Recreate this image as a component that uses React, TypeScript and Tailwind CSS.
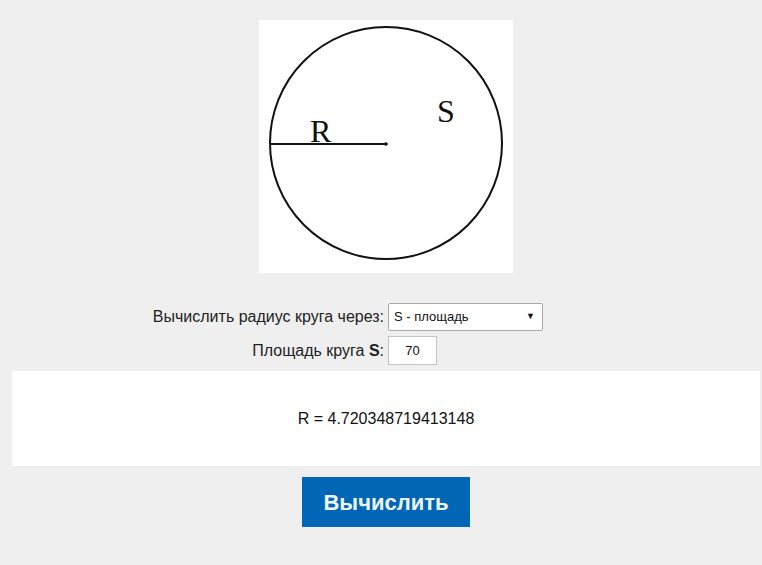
export default function App() {
  return (
    <div className="min-h-[565px] bg-[#efefef] pt-5 pl-3 pr-[2px] font-['Liberation_Sans',Arial,sans-serif] text-[#222]">
      <div className="flex justify-center">
        <svg width="254" height="253" viewBox="0 0 254 253" className="block bg-white">
          <circle cx="127" cy="123" r="116" fill="none" stroke="#111" strokeWidth="2" />
          <line x1="11" y1="124" x2="127" y2="124" stroke="#111" strokeWidth="2" />
          <circle cx="127" cy="124" r="1.8" fill="#111" />
          <text x="51" y="122" fontFamily="'Liberation Serif', 'Times New Roman', serif" fontSize="32" fill="#111">
            R
          </text>
          <text x="178" y="102" fontFamily="'Liberation Serif', 'Times New Roman', serif" fontSize="32" fill="#111">
            S
          </text>
        </svg>
      </div>

      <div className="mt-[30px] grid grid-cols-[372px_1fr] items-center gap-x-1 gap-y-[5px] text-[16px]">
        <label className="text-right">Вычислить радиус круга через:</label>
        <div className="flex h-[28px] w-[155px] items-center justify-between rounded-[2px] border border-[#a9a9a9] bg-white pl-[5px] pr-[7px] text-[13px] text-[#111]">
          <span>S - площадь</span>
          <span className="text-[9px]">▼</span>
        </div>
        <label className="text-right">
          Площадь круга <b>S</b>:
        </label>
        <div className="flex h-[29px] w-[49px] items-center justify-center border border-[#c4c4c4] bg-white text-[13px] text-[#111]">
          70
        </div>
      </div>

      <div className="mt-[6px] flex h-[95px] items-center justify-center bg-white text-[16px] text-[#111]">
        R = 4.720348719413148
      </div>

      <div className="mt-[11px] flex justify-center">
        <button className="h-[50px] w-[168px] bg-[#0066b5] text-[22px] font-bold text-[#eef6ff]">
          Вычислить
        </button>
      </div>
    </div>
  );
}
